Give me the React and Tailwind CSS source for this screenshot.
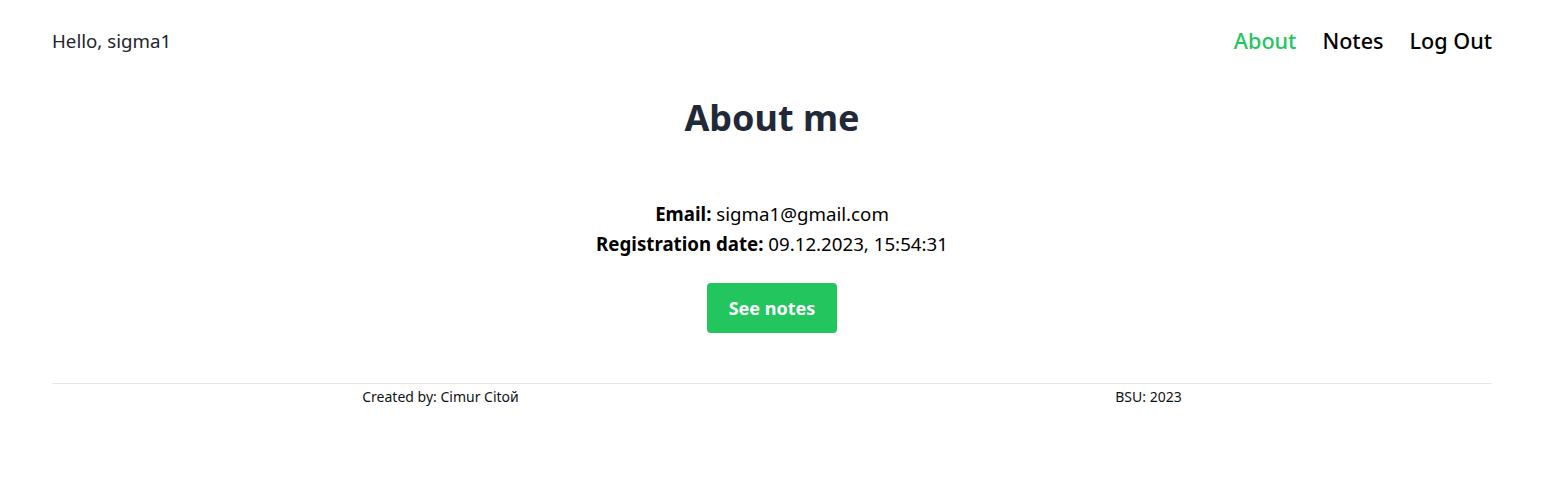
export default function App() {
  return (
    <div className="w-full bg-white text-black" style={{ fontFamily: '"Noto Sans", "Open Sans", sans-serif' }}>
      <div className="ml-[52px] w-[1440px]">
        <header className="flex items-center justify-between h-[82px]">
          <span className="text-[18.7px] text-[#212529]">Hello, sigma1</span>
          <nav className="flex items-center gap-[26px] text-[21.6px] font-medium">
            <a className="text-[#22c55e]">About</a>
            <a>Notes</a>
            <a>Log Out</a>
          </nav>
        </header>
        <main className="flex flex-col items-center">
          <h1 className="text-[36px] font-bold text-[#1f2937] leading-[72px]">About me</h1>
          <div className="mt-[45px] text-[18.7px] leading-[30px] text-center">
            <p><span className="font-bold">Email:</span> sigma1@gmail.com</p>
            <p><span className="font-bold">Registration date:</span> 09.12.2023, 15:54:31</p>
          </div>
          <button className="mt-[24px] w-[130px] h-[50px] rounded-[4px] bg-[#22c55e] text-white font-bold text-[18px]">See notes</button>
        </main>
        <footer className="mt-[50px] border-t border-[#e5e7eb] flex justify-around px-[12px] pt-[2px] text-[14px] text-[#111]">
          <span>Created by: Cimur Citoй</span>
          <span>BSU: 2023</span>
        </footer>
      </div>
    </div>
  );
}
